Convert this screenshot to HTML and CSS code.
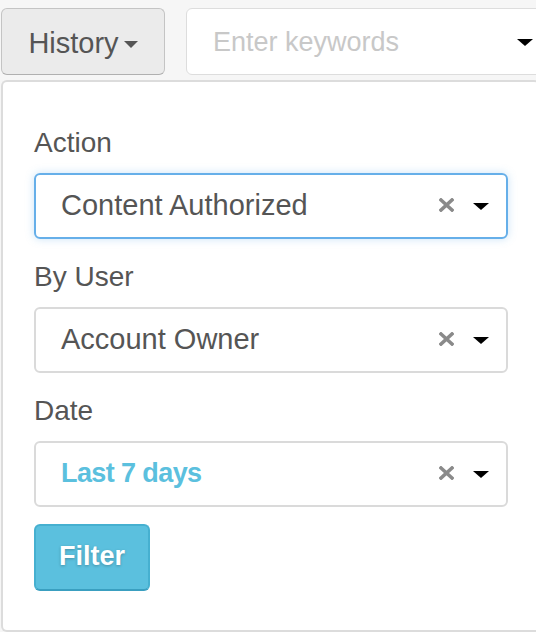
FILE: index.html
```html
<!DOCTYPE html>
<html>
<head>
<meta charset="utf-8">
<link rel="stylesheet" href="styles.css">
</head>
<body>
<div class="topbar">
  <button class="history-btn">History<span class="caret caret-dark"></span></button>
  <div class="search">
    <span class="placeholder">Enter keywords</span>
    <span class="caret caret-black"></span>
  </div>
</div>
<div class="panel">
  <div class="field">
    <div class="label">Action</div>
    <div class="select focused">
      <span class="value">Content Authorized</span>
      <svg class="clear" width="15" height="14" viewBox="0 0 15 14"><path d="M2 2L13 12M13 2L2 12" stroke="#8a8a8a" stroke-width="3.6" stroke-linecap="square"/></svg>
      <span class="caret caret-black"></span>
    </div>
  </div>
  <div class="field">
    <div class="label">By User</div>
    <div class="select">
      <span class="value">Account Owner</span>
      <svg class="clear" width="15" height="14" viewBox="0 0 15 14"><path d="M2 2L13 12M13 2L2 12" stroke="#8a8a8a" stroke-width="3.6" stroke-linecap="square"/></svg>
      <span class="caret caret-black"></span>
    </div>
  </div>
  <div class="field">
    <div class="label">Date</div>
    <div class="select">
      <span class="value highlight">Last 7 days</span>
      <svg class="clear" width="15" height="14" viewBox="0 0 15 14"><path d="M2 2L13 12M13 2L2 12" stroke="#8a8a8a" stroke-width="3.6" stroke-linecap="square"/></svg>
      <span class="caret caret-black"></span>
    </div>
  </div>
  <button class="filter-btn">Filter</button>
</div>
</body>
</html>
```

FILE: styles.css
```css
* { box-sizing: border-box; }
html, body { margin: 0; height: 100%; }
body {
  background: #f6f6f6;
  font-family: "Liberation Sans", Arial, sans-serif;
  color: #555;
  overflow: hidden;
}
.topbar {
  display: flex;
  gap: 21px;
  padding: 8px 0 0 1px;
  height: 80px;
}
.history-btn {
  width: 164px;
  height: 67px;
  border: 1px solid #c4c4c4;
  border-bottom-color: #b0b0b0;
  border-radius: 6px;
  background: #ebebeb;
  font-family: inherit;
  font-size: 29px;
  color: #555;
  display: flex;
  align-items: center;
  justify-content: center;
  gap: 5px;
  padding: 3px 0 0;
}
.search {
  flex: 1;
  height: 67px;
  margin-right: -8px;
  border: 1px solid #ddd;
  border-radius: 6px;
  background: #fff;
  display: flex;
  align-items: center;
  justify-content: space-between;
  padding: 2px 10px 0 26px;
}
.placeholder { font-size: 27px; color: #c8c8c8; }
.caret {
  display: inline-block;
  width: 0; height: 0;
  border-left: 8px solid transparent;
  border-right: 8px solid transparent;
  border-top: 7px solid #000;
}
.caret-dark { border-top-color: #555; margin-top: 3px; border-left-width: 7px; border-right-width: 7px; }
.caret-black { border-top-color: #000; }
.panel {
  margin-left: 1px;
  margin-right: -4px;
  height: 552px;
  background: #fff;
  border: 2px solid #dcdcdc;
  border-right: none;
  border-radius: 6px 6px 0 6px;
  padding: 44px 0 0 31px;
}
.field { margin-bottom: 21px; }
.field:last-of-type { margin-bottom: 17px; }
.label {
  font-size: 28px;
  line-height: 34px;
  margin-bottom: 13px;
}
.select {
  width: 474px;
  height: 66px;
  border: 2px solid #dadada;
  border-radius: 6px;
  display: flex;
  align-items: center;
  padding: 0 17px 0 25px;
}
.select.focused {
  border-color: #66afe9;
  box-shadow: 0 0 8px rgba(102, 175, 233, 0.35);
}
.value { flex: 1; font-size: 29px; color: #555; padding-bottom: 2px; }
.value.highlight { color: #5bc0de; font-weight: bold; font-size: 27px; letter-spacing: -0.6px; }
.clear {
  display: block;
  margin-right: 19px;
  margin-bottom: 3px;
}
.filter-btn {
  width: 116px;
  height: 67px;
  background: #5bc0de;
  border: 2px solid #46b0d0;
  border-bottom-color: #3a9fc0;
  border-radius: 6px;
  color: #fff;
  font-family: inherit;
  font-size: 27px;
  font-weight: bold;
  text-shadow: 0 1px 3px rgba(0, 0, 0, 0.25);
  padding: 0 0 2px;
}
```
